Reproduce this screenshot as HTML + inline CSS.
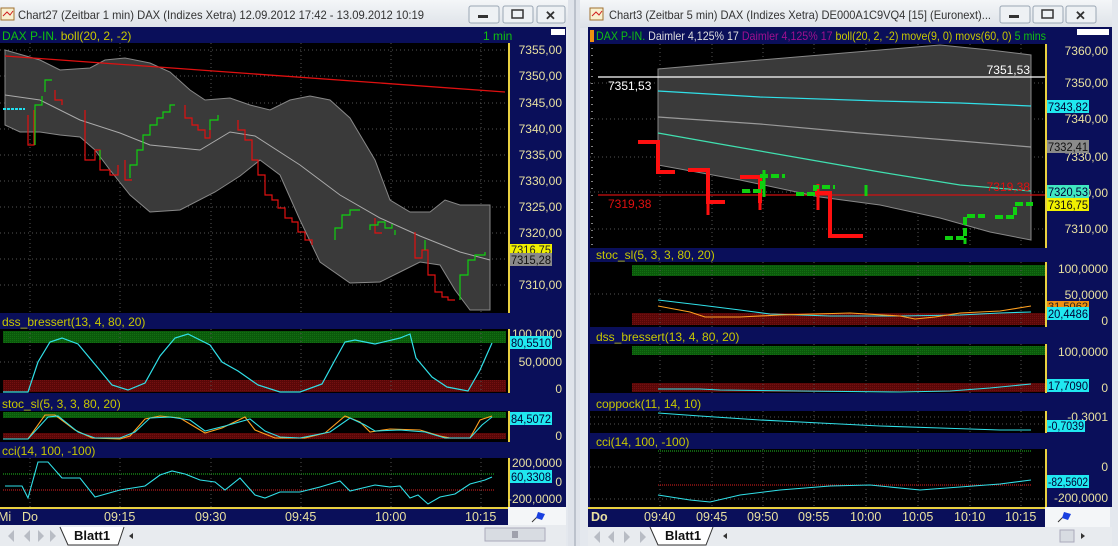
<!DOCTYPE html>
<html><head><meta charset="utf-8"><style>
html,body{margin:0;padding:0;width:1118px;height:546px;overflow:hidden;background:#e4e8ee;}
svg{display:block;font-family:"Liberation Sans",sans-serif;}
.v{font-size:11.5px;}
</style></head><body>
<svg width="1118" height="546" viewBox="0 0 1118 546" xmlns="http://www.w3.org/2000/svg">
<defs>
<linearGradient id="tb" x1="0" y1="0" x2="0" y2="1"><stop offset="0" stop-color="#f4f6f8"/><stop offset="1" stop-color="#dde2e8"/></linearGradient>
<pattern id="gdots" width="2" height="2" patternUnits="userSpaceOnUse"><rect width="2" height="2" fill="#0b5a0b"/><rect width="1" height="1" fill="#127012"/></pattern>
<pattern id="rdots" width="2" height="2" patternUnits="userSpaceOnUse"><rect width="2" height="2" fill="#5a0808"/><rect width="1" height="1" fill="#741010"/></pattern>
</defs>
<rect width="1118" height="546" fill="#e4e8ee"/>
<!-- LEFT WINDOW -->
<rect x="0" y="0" width="568" height="28" fill="url(#tb)"/>
<rect x="1" y="8" width="13" height="12" fill="#f8f0d0" stroke="#a07030"/><path d="M3 16 L7 12 L10 15 L13 11" stroke="#d02020" fill="none"/>
<text x="18" y="19" font-size="11.6" fill="#333" textLength="406" lengthAdjust="spacingAndGlyphs">Chart27 (Zeitbar 1 min)  DAX (Indizes Xetra) 12.09.2012 17:42 - 13.09.2012 10:19</text>
<g fill="#eef1f4" stroke="#9aa6b4"><rect x="469" y="6" width="30" height="17" rx="2"/><rect x="503" y="6" width="30" height="17" rx="2"/><rect x="537" y="6" width="28" height="17" rx="2"/></g>
<rect x="478" y="15" width="10" height="3" fill="#333"/>
<rect x="512" y="10" width="11" height="8" fill="none" stroke="#333" stroke-width="1.5"/>
<text x="545" y="20" font-size="13" font-weight="bold" fill="#333">✕</text>
<rect x="0" y="27" width="566" height="480" fill="#0a0f5a"/>
<text x="2" y="40" font-size="12" fill="#10c010">DAX P-IN. <tspan fill="#c8c800">boll(20, 2, -2)</tspan></text>
<text x="483" y="40" font-size="12" fill="#10c010">1 min</text>
<rect x="551" y="29" width="14" height="6" fill="#fff"/>
<rect x="0" y="43" width="508" height="270" fill="#000"/>
<g stroke="#555" stroke-dasharray="1,3"><path d="M30 43V313M120 43V313M211 43V313M301 43V313M391 43V313M481 43V313"/><path d="M0 50H508M0 76H508M0 103H508M0 129H508M0 155H508M0 181H508M0 207H508M0 233H508M0 259H508M0 285H508"/></g>
<polygon fill="#3a3a3a" stroke="#888" points="5,50 40,60 60,70 90,68 105,60 125,58 150,63 170,72 190,90 205,100 230,98 250,105 270,110 290,100 310,96 330,100 350,118 375,160 390,200 410,212 430,212 445,200 460,205 490,205 490,310 470,310 455,290 440,265 420,262 400,272 380,282 350,283 320,262 300,220 280,175 260,160 240,176 215,192 180,210 150,212 130,195 110,170 95,150 80,137 60,135 40,132 20,132 5,125"/>
<polyline fill="none" stroke="#aaa" points="5,95 40,100 80,120 120,133 150,145 200,150 230,132 255,136 300,165 340,195 380,218 420,236 460,252 490,260"/>
<path d="M5 56 L505 92" stroke="#e01010" stroke-width="1.3"/>
<path fill="none" stroke="#e01010" stroke-width="1.2" d="M28 115V145H34V110M55 90V100H62V105M85 110V160H95V150H100V170H110V175H118V165M125 160V180H132M185 105V118H192V125H198V130H205V138H210V128M238 120V130H245V140H252V160H258V175H265V195H272V200H278V208H285V218H292V222H298V232H305V240H312V245M375 218V233H382M415 232V258H422V250H428V275H435V292H442V297H448V300H455"/>
<path fill="none" stroke="#10d010" stroke-width="1.2" d="M35 145V105H42V96M45 92V80H52M100 160V150M130 178V165H137V150H143V135H150V125H157V118H163V112H170V105H175M210 130V120H218V115M335 240V228H342V215H350V210H360M370 230V225H378V222H385V228H392V224M395 230V235M425 250V240M460 300V275H468V260H475V255H485V252"/>
<path d="M3 109H25" stroke="#20e0f0" stroke-dasharray="3,1" stroke-width="2"/>
<rect x="508" y="43" width="55" height="270" fill="#0a0f5a"/><path d="M509 43V313" stroke="#e8d040" stroke-width="2"/>
<g font-size="12" fill="#e8e0a0" text-anchor="end"><text x="562" y="54">7355,00</text><text x="562" y="80">7350,00</text><text x="562" y="107">7345,00</text><text x="562" y="133">7340,00</text><text x="562" y="159">7335,00</text><text x="562" y="185">7330,00</text><text x="562" y="211">7325,00</text><text x="562" y="237">7320,00</text><text x="562" y="289">7310,00</text></g>
<rect x="510" y="244" width="42" height="12" fill="#f0f000"/><text x="511" y="254" class="v" fill="#222" textLength="40" lengthAdjust="spacingAndGlyphs">7316,75</text>
<rect x="510" y="253" width="42" height="13" fill="#8a8a8a"/><text x="511" y="264" class="v" fill="#111" textLength="40" lengthAdjust="spacingAndGlyphs">7315,28</text>
<text x="2" y="326" font-size="12" fill="#c8c800">dss_bressert(13, 4, 80, 20)</text>
<rect x="0" y="329" width="508" height="64" fill="#000"/>
<rect x="3" y="331" width="503" height="12" fill="url(#gdots)"/><rect x="3" y="380" width="503" height="12" fill="url(#rdots)"/>
<g stroke="#555" stroke-dasharray="1,3"><path d="M30 329V393M120 329V393M211 329V393M301 329V393M391 329V393M481 329V393M0 362H508"/></g>
<polyline fill="none" stroke="#30e0e8" stroke-width="1.2" points="3,392 28,392 38,362 50,342 62,338 78,344 98,368 112,385 128,390 145,383 160,356 175,338 188,334 210,345 222,362 238,371 258,385 280,392 300,392 322,384 335,360 345,342 355,340 375,344 400,338 410,334 416,358 432,377 447,387 468,391 480,370 492,343"/>
<rect x="508" y="329" width="55" height="64" fill="#0a0f5a"/><path d="M509 329V393" stroke="#e8d040" stroke-width="2"/>
<g font-size="12" fill="#e8e0a0" text-anchor="end"><text x="562" y="338">100,0000</text><text x="562" y="366">50,0000</text><text x="562" y="393">0</text></g>
<rect x="510" y="336" width="42" height="13" fill="#20e8f0"/><text x="511" y="347" class="v" fill="#003" textLength="40" lengthAdjust="spacingAndGlyphs">80,5510</text>
<text x="2" y="408" font-size="12" fill="#c8c800">stoc_sl(5, 3, 3, 80, 20)</text>
<rect x="0" y="411" width="508" height="31" fill="#000"/>
<rect x="3" y="412" width="503" height="6" fill="url(#gdots)"/><rect x="3" y="433" width="503" height="6" fill="url(#rdots)"/>
<polyline fill="none" stroke="#ffa020" stroke-width="1.1" points="3,439 28,439 45,415 55,415 75,430 92,438 120,439 130,436 145,419 160,416 180,418 205,433 222,428 245,417 255,430 275,438 305,438 325,433 345,416 360,422 370,432 390,429 420,430 440,436 450,438 470,438 480,420 492,416"/>
<polyline fill="none" stroke="#30e0e8" stroke-width="1.1" points="3,439 28,439 48,417 58,416 78,432 95,438 120,438 135,432 150,418 170,417 190,420 205,431 225,426 250,419 265,431 280,437 300,438 330,432 350,418 365,425 375,431 400,430 425,432 445,438 470,438 482,425 492,417"/>
<rect x="508" y="411" width="55" height="31" fill="#0a0f5a"/><path d="M509 411V442" stroke="#e8d040" stroke-width="2"/>
<text x="562" y="440" font-size="12" fill="#e8e0a0" text-anchor="end">0</text>
<rect x="510" y="412" width="42" height="13" fill="#20e8f0"/><text x="511" y="423" class="v" fill="#003" textLength="40" lengthAdjust="spacingAndGlyphs">84,5072</text>
<text x="2" y="455" font-size="12" fill="#c8c800">cci(14, 100, -100)</text>
<rect x="0" y="458" width="508" height="49" fill="#000"/>
<path d="M3 474H495" stroke="#20c020" stroke-dasharray="1,1"/><path d="M3 490H495" stroke="#e02020" stroke-dasharray="1,1"/>
<g stroke="#555" stroke-dasharray="1,3"><path d="M30 458V507M120 458V507M211 458V507M301 458V507M391 458V507M481 458V507"/></g>
<polyline fill="none" stroke="#30e0e8" stroke-width="1.1" points="5,486 22,486 28,498 38,462 48,462 62,478 80,478 95,497 120,490 145,486 160,475 172,471 185,474 200,480 215,482 225,490 240,478 255,495 265,498 280,492 300,492 320,487 340,481 350,491 375,485 390,487 400,486 410,498 418,495 428,504 440,497 455,494 470,484 485,480 492,477"/>
<rect x="508" y="458" width="55" height="49" fill="#0a0f5a"/><path d="M509 458V507" stroke="#e8d040" stroke-width="2"/>
<g font-size="12" fill="#e8e0a0" text-anchor="end"><text x="562" y="467">200,0000</text><text x="562" y="486">0</text><text x="562" y="503">-200,0000</text></g>
<rect x="510" y="470" width="42" height="13" fill="#20e8f0"/><text x="511" y="481" class="v" fill="#003" textLength="40" lengthAdjust="spacingAndGlyphs">60,3308</text>
<rect x="0" y="507" width="508" height="18" fill="#0a0f5a"/><path d="M0 508H508" stroke="#e8d040" stroke-width="2"/>
<g font-size="12.5" fill="#e8e0a0"><text x="-2" y="521">Mi</text><text x="22" y="521">Do</text><text x="104" y="521">09:15</text><text x="195" y="521">09:30</text><text x="285" y="521">09:45</text><text x="375" y="521">10:00</text><text x="465" y="521">10:15</text></g>
<rect x="508" y="507" width="58" height="18" fill="#f4f6f8"/><path d="M532 522L540 514" stroke="#333"/><path d="M538 512L545 514L542 520L536 518Z" fill="#1a40e0"/>
<rect x="0" y="525" width="566" height="21" fill="#e8ebef"/>
<g fill="#b8bcc4"><path d="M6 530V542M8 536L14 530V542Z"/><path d="M24 536L30 530V542Z"/><path d="M38 530V542L44 536Z"/><path d="M50 530V542L56 536Z M58 530V542"/></g>
<path d="M60 527L68 545H118L124 527" fill="#fff" stroke="#333"/>
<text x="74" y="540" font-size="13" font-weight="bold" fill="#111">Blatt1</text>
<path d="M133 533L129 536L133 539Z" fill="#333"/>
<rect x="485" y="528" width="60" height="13" fill="#d8dce2" stroke="#aab"/><path d="M513 531V538M515 531V538M517 531V538" stroke="#667"/>
<rect x="568" y="0" width="12" height="546" fill="#dfe3ea"/><path d="M575 0V546" stroke="#9aa2ae"/>
<!-- RIGHT WINDOW -->
<rect x="580" y="0" width="538" height="28" fill="url(#tb)"/>
<rect x="590" y="8" width="13" height="12" fill="#f8f0d0" stroke="#a07030"/><path d="M592 16 L596 12 L599 15 L602 11" stroke="#d02020" fill="none"/>
<text x="609" y="19" font-size="11.6" fill="#333" textLength="382" lengthAdjust="spacingAndGlyphs">Chart3 (Zeitbar 5 min)  DAX (Indizes Xetra) DE000A1C9VQ4 [15] (Euronext)...</text>
<g fill="#eef1f4" stroke="#9aa6b4"><rect x="1000" y="6" width="30" height="17" rx="2"/><rect x="1033" y="6" width="30" height="17" rx="2"/><rect x="1066" y="6" width="30" height="17" rx="2"/></g>
<rect x="1009" y="15" width="10" height="3" fill="#333"/>
<rect x="1042" y="10" width="11" height="8" fill="none" stroke="#333" stroke-width="1.5"/>
<text x="1075" y="20" font-size="13" font-weight="bold" fill="#333">✕</text>
<rect x="588" y="27" width="524" height="480" fill="#0a0f5a"/>
<rect x="590" y="30" width="4" height="12" fill="#f09010"/>
<text x="596" y="40" font-size="12" fill="#10c010" textLength="450" lengthAdjust="spacingAndGlyphs">DAX P-IN. <tspan fill="#ddd">Daimler  4,125% 17</tspan> <tspan fill="#a01090">Daimler  4,125% 17</tspan> <tspan fill="#c8c800">boll(20, 2, -2) move(9, 0) movs(60, 0)</tspan>   5 mins</text>
<rect x="1077" y="29" width="32" height="6" fill="#fff"/>
<rect x="590" y="44" width="455" height="204" fill="#000"/>
<g stroke="#555" stroke-dasharray="1,3"><path d="M660 44V248M712 44V248M763 44V248M814 44V248M866 44V248M918 44V248M970 44V248M1021 44V248"/><path d="M590 83H1045M590 119H1045M590 157H1045M590 192H1045M590 229H1045"/></g>
<path d="M592 48v200" stroke="#fff" stroke-dasharray="1,6"/>
<polygon fill="#3a3a3a" stroke="#888" points="658,69 760,60 880,50 940,45 990,50 1031,55 1031,240 990,232 940,218 880,205 820,197 740,180 658,165"/>
<path d="M598 77H1045" stroke="#fff" stroke-width="1.3"/>
<text x="608" y="90" font-size="12" fill="#fff">7351,53</text><text x="1030" y="74" font-size="12" fill="#fff" text-anchor="end">7351,53</text>
<polyline fill="none" stroke="#30e0e8" stroke-width="1.2" points="658,91 760,97 880,101 960,103 1031,106"/>
<polyline fill="none" stroke="#999" stroke-width="1.2" points="658,117 760,124 860,133 960,141 1031,147"/>
<polyline fill="none" stroke="#40e0b0" stroke-width="1.2" points="658,133 720,144 800,158 880,172 960,185 1031,191"/>
<path d="M598 195H1045" stroke="#d01010" stroke-width="1.2"/>
<text x="608" y="208" font-size="12" fill="#e01010">7319,38</text><text x="1030" y="191" font-size="12" fill="#e01010" text-anchor="end">7319,38</text>
<path fill="none" stroke="#ff1010" stroke-width="4" d="M638 142H658V172H675M688 170H708V202H725M740 177H760V203M815 193H830V236H863"/>
<path fill="none" stroke="#ff1010" stroke-width="3" d="M708 170V215M760 176V210M818 184V210"/>
<path fill="none" stroke="#10d010" stroke-width="4" stroke-dasharray="8,3" d="M742 191H762V176H785M796 194H815V187H835M945 238H965V216H985M995 217H1015V204H1033"/>
<path fill="none" stroke="#10d010" stroke-width="3" d="M764 170V197M866 185V196M965 238V244"/>
<rect x="1045" y="44" width="65" height="204" fill="#0a0f5a"/><path d="M1046 44V248" stroke="#e8d040" stroke-width="2"/>
<g font-size="12" fill="#e8e0a0" text-anchor="end"><text x="1108" y="55">7360,00</text><text x="1108" y="87">7350,00</text><text x="1108" y="123">7340,00</text><text x="1108" y="161">7330,00</text><text x="1108" y="197">7320,00</text><text x="1108" y="233">7310,00</text></g>
<rect x="1047" y="100" width="42" height="13" fill="#20e8f0"/><text x="1048" y="111" class="v" fill="#003" textLength="40" lengthAdjust="spacingAndGlyphs">7343,82</text>
<rect x="1047" y="140" width="42" height="13" fill="#8a8a8a"/><text x="1048" y="151" class="v" fill="#111" textLength="40" lengthAdjust="spacingAndGlyphs">7332,41</text>
<rect x="1047" y="185" width="42" height="13" fill="#40e8c0"/><text x="1048" y="196" class="v" fill="#003" textLength="40" lengthAdjust="spacingAndGlyphs">7320,53</text>
<rect x="1047" y="198" width="42" height="13" fill="#f0f000"/><text x="1048" y="209" class="v" fill="#111" textLength="40" lengthAdjust="spacingAndGlyphs">7316,75</text>
<text x="596" y="259" font-size="12" fill="#c8c800">stoc_sl(5, 3, 3, 80, 20)</text>
<rect x="590" y="262" width="455" height="65" fill="#000"/>
<rect x="632" y="265" width="413" height="11" fill="url(#gdots)"/><rect x="632" y="313" width="413" height="12" fill="url(#rdots)"/>
<g stroke="#555" stroke-dasharray="1,3"><path d="M660 262V327M712 262V327M763 262V327M814 262V327M866 262V327M918 262V327M970 262V327M1021 262V327M590 294H1045"/></g>
<polyline fill="none" stroke="#30e0e8" stroke-width="1.1" points="658,300 700,305 740,310 770,314 830,316 900,316 960,315 1000,313 1031,312"/>
<polyline fill="none" stroke="#ffa020" stroke-width="1.1" points="658,306 690,312 705,317 740,317 780,315 850,313 900,316 915,319 935,317 960,313 1000,311 1031,306"/>
<rect x="1045" y="262" width="65" height="65" fill="#0a0f5a"/><path d="M1046 262V327" stroke="#e8d040" stroke-width="2"/>
<g font-size="12" fill="#e8e0a0" text-anchor="end"><text x="1108" y="273">100,0000</text><text x="1108" y="299">50,0000</text><text x="1108" y="325">0</text></g>
<rect x="1047" y="301" width="42" height="9" fill="#f09010"/><text x="1048" y="310" font-size="11" fill="#222" textLength="40" lengthAdjust="spacingAndGlyphs">31,5062</text>
<rect x="1047" y="307" width="42" height="13" fill="#20e8f0"/><text x="1048" y="318" class="v" fill="#003" textLength="40" lengthAdjust="spacingAndGlyphs">20,4486</text>
<text x="596" y="341" font-size="12" fill="#c8c800">dss_bressert(13, 4, 80, 20)</text>
<rect x="590" y="344" width="455" height="49" fill="#000"/>
<rect x="632" y="346" width="413" height="9" fill="url(#gdots)"/><rect x="632" y="383" width="413" height="9" fill="url(#rdots)"/>
<g stroke="#555" stroke-dasharray="1,3"><path d="M660 344V393M712 344V393M763 344V393M814 344V393M866 344V393M918 344V393M970 344V393M1021 344V393"/></g>
<polyline fill="none" stroke="#30e0e8" stroke-width="1.1" points="658,389 700,389 720,390 800,391 900,392 950,391 990,388 1031,384"/>
<rect x="1045" y="344" width="65" height="49" fill="#0a0f5a"/><path d="M1046 344V393" stroke="#e8d040" stroke-width="2"/>
<g font-size="12" fill="#e8e0a0" text-anchor="end"><text x="1108" y="356">100,0000</text><text x="1108" y="392">0</text></g>
<rect x="1047" y="379" width="42" height="13" fill="#20e8f0"/><text x="1048" y="390" class="v" fill="#003" textLength="40" lengthAdjust="spacingAndGlyphs">17,7090</text>
<text x="596" y="408" font-size="12" fill="#c8c800">coppock(11, 14, 10)</text>
<rect x="590" y="411" width="455" height="22" fill="#000"/>
<g stroke="#555" stroke-dasharray="1,3"><path d="M590 417H1045M590 424H1045M660 411V433M712 411V433M763 411V433M814 411V433M866 411V433M918 411V433M970 411V433M1021 411V433"/></g>
<polyline fill="none" stroke="#30e0e8" stroke-width="1.1" points="658,413 700,416 760,420 820,423 880,426 940,428 1000,430 1031,430"/>
<rect x="1045" y="411" width="65" height="22" fill="#0a0f5a"/><path d="M1046 411V433" stroke="#e8d040" stroke-width="2"/>
<text x="1108" y="421" font-size="12" fill="#e8e0a0" text-anchor="end">-0,3001</text>
<rect x="1047" y="420" width="38" height="12" fill="#20e8f0"/><text x="1048" y="430" class="v" fill="#003" textLength="36" lengthAdjust="spacingAndGlyphs">-0,7039</text>
<text x="596" y="446" font-size="12" fill="#c8c800">cci(14, 100, -100)</text>
<rect x="590" y="449" width="455" height="58" fill="#000"/>
<g stroke="#555" stroke-dasharray="1,3"><path d="M660 449V507M712 449V507M763 449V507M814 449V507M866 449V507M918 449V507M970 449V507M1021 449V507M590 467H1045M590 499H1045"/></g>
<path d="M658 451H1031" stroke="#20c020" stroke-dasharray="1,1"/><path d="M658 485H1031" stroke="#e02020" stroke-dasharray="1,1"/>
<polyline fill="none" stroke="#30e0e8" stroke-width="1.1" points="658,495 690,500 710,502 740,495 780,490 830,486 870,485 920,490 960,487 1000,484 1031,480"/>
<rect x="1045" y="449" width="65" height="58" fill="#0a0f5a"/><path d="M1046 449V507" stroke="#e8d040" stroke-width="2"/>
<g font-size="12" fill="#e8e0a0" text-anchor="end"><text x="1108" y="471">0</text><text x="1108" y="502">-200,0000</text></g>
<rect x="1047" y="475" width="42" height="13" fill="#20e8f0"/><text x="1048" y="486" class="v" fill="#003" textLength="40" lengthAdjust="spacingAndGlyphs">-82,5602</text>
<rect x="588" y="507" width="457" height="20" fill="#0a0f5a"/><path d="M588 508H1045" stroke="#e8d040" stroke-width="2"/>
<g font-size="12.5" fill="#e8e0a0"><text x="591" y="521" font-weight="bold">Do</text><text x="644" y="521">09:40</text><text x="696" y="521">09:45</text><text x="747" y="521">09:50</text><text x="798" y="521">09:55</text><text x="850" y="521">10:00</text><text x="902" y="521">10:05</text><text x="954" y="521">10:10</text><text x="1005" y="521">10:15</text></g>
<rect x="1045" y="507" width="65" height="20" fill="#f4f6f8"/><path d="M1058 522L1066 514" stroke="#333"/><path d="M1064 512L1071 514L1068 520L1062 518Z" fill="#1a40e0"/>
<rect x="588" y="527" width="524" height="19" fill="#e8ebef"/>
<g fill="#b8bcc4"><path d="M592 531V543M594 537L600 531V543Z"/><path d="M608 537L614 531V543Z"/><path d="M624 531V543L630 537Z"/><path d="M640 531V543L646 537Z M648 531V543"/></g>
<path d="M650 527L658 545H706L713 527" fill="#fff" stroke="#333"/>
<text x="665" y="540" font-size="13" font-weight="bold" fill="#111">Blatt1</text>
<path d="M727 533L723 536L727 539Z" fill="#333"/>
<rect x="1060" y="530" width="14" height="12" fill="#d8dce2" stroke="#aab"/>
<path d="M1081 533L1085 536L1081 539Z" fill="#333"/>
<rect x="1112" y="0" width="6" height="546" fill="#e4e8ee"/>
</svg>
</body></html>
